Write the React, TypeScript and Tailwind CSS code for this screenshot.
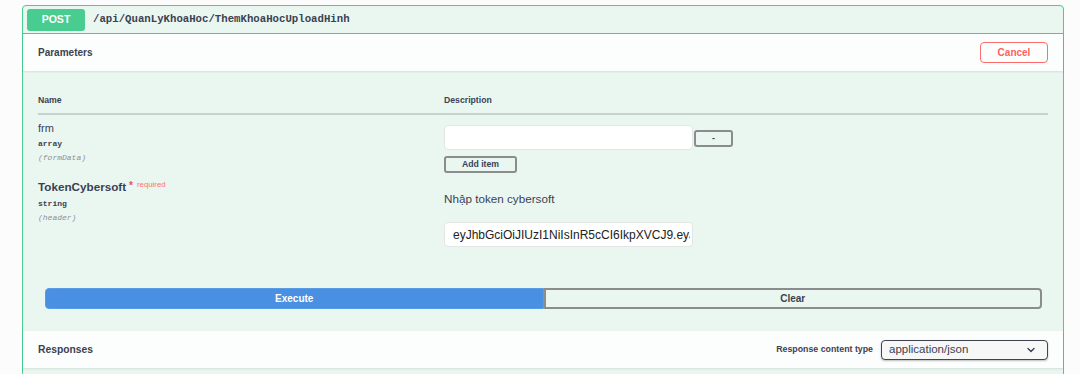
import React from 'react';

const sans = { fontFamily: '"Liberation Sans", Arial, sans-serif' };

const Chevron = () => (
  <svg width="8" height="6" viewBox="0 0 8 6" fill="none">
    <path d="M1 1.5 L4 4.5 L7 1.5" stroke="#3b4151" strokeWidth="1.4" strokeLinecap="round" strokeLinejoin="round" />
  </svg>
);

export default function App() {
  return (
    <div className="w-[1080px] h-[374px] overflow-hidden bg-[#fcfcfc] pt-[5px] pl-[22px]" style={sans}>
      <div className="w-[1042px] h-[400px] rounded-t-[4px] border border-[#49cc90] bg-[#eaf7f1] text-[#3b4151]">
        {/* summary */}
        <div className="h-[28px] flex items-center pl-[4px] border-b border-[#49cc90]">
          <div className="w-[58px] h-[22px] rounded-[3px] bg-[#49cc90] text-white text-[10.5px] font-bold flex items-center justify-center">
            POST
          </div>
          <span className="ml-[8px] text-[10.7px] font-bold font-['Liberation_Mono',monospace]">
            /api/QuanLyKhoaHoc/ThemKhoaHocUploadHinh
          </span>
        </div>

        {/* parameters header */}
        <div className="h-[37px] flex items-center justify-between px-[15px] bg-[#fbfefd] shadow-[0_1px_2px_rgba(0,0,0,0.1)]">
          <h4 className="text-[10px] font-bold">Parameters</h4>
          <button className="w-[68px] h-[21px] rounded-[4px] border border-[#ff6a6a] text-[#ff6060] text-[10px] font-bold">
            Cancel
          </button>
        </div>

        {/* parameters body */}
        <div className="h-[260px]">
          <div className="px-[15px]">
            <div className="grid grid-cols-[406px_1fr] pt-[23px] pb-[7px] border-b-2 border-[rgba(59,65,81,0.2)] text-[8.7px] font-bold leading-[12px]">
              <div>Name</div>
              <div>Description</div>
            </div>

            {/* frm */}
            <div className="grid grid-cols-[406px_1fr] h-[60px]">
              <div className="pt-[6px]">
                <div className="text-[11px] leading-[14px]">frm</div>
                <div className="mt-[4px] text-[8px] leading-[10px] font-bold font-['Liberation_Mono',monospace]">array</div>
                <div className="mt-[4px] text-[8px] leading-[10px] italic text-[#8e9096] font-['Liberation_Mono',monospace]">(formData)</div>
              </div>
              <div className="pt-[10px]">
                <div className="flex items-start">
                  <div className="w-[249px] h-[25px] rounded-[4px] border border-[#e2e6e4] bg-white" />
                  <button className="ml-[1px] mt-[5px] w-[39px] h-[17px] rounded-[3px] border-2 border-[#8a8c8e] text-[9px] font-bold leading-none">
                    -
                  </button>
                </div>
                <button className="mt-[5px] w-[73px] h-[17px] rounded-[3px] border-2 border-[#8a8c8e] text-[8.7px] font-bold leading-none">
                  Add item
                </button>
              </div>
            </div>

            {/* TokenCybersoft */}
            <div className="grid grid-cols-[406px_1fr] h-[72px]">
              <div className="pt-[5px]">
                <div className="flex items-start leading-[14px]">
                  <span className="text-[11.7px] font-bold">TokenCybersoft</span>
                  <span className="ml-[3px] text-[10px] font-bold text-[#ea5050] leading-[12px]">*</span>
                  <span className="ml-[4px] text-[7.8px] text-[#ff7070] leading-[10px]">required</span>
                </div>
                <div className="mt-[5px] text-[8px] leading-[10px] font-bold font-['Liberation_Mono',monospace]">string</div>
                <div className="mt-[4px] text-[8px] leading-[10px] italic text-[#8e9096] font-['Liberation_Mono',monospace]">(header)</div>
              </div>
              <div className="pt-[17px]">
                <p className="text-[11.7px] leading-[14px]">Nhập token cybersoft</p>
                <input
                  readOnly
                  value="eyJhbGciOiJIUzI1NiIsInR5cCI6IkpXVCJ9.eyJTb1RlbiI6IkJvb3RjYW1w"
                  className="block mt-[16px] w-[249px] h-[25px] rounded-[4px] border border-[#e2e6e4] bg-white pl-[8px] pr-[2px] text-[12px] text-[#222] outline-none"
                />
              </div>
            </div>
          </div>

          {/* execute */}
          <div className="mt-[41px] pl-[22px] pr-[21px] grid grid-cols-2">
            <button className="h-[21px] rounded-l-[4px] bg-[#4990e2] border border-[#5a9be6] text-white text-[10px] font-bold">
              Execute
            </button>
            <button className="h-[21px] rounded-r-[4px] border-2 border-[#8a8c8e] text-[10px] font-bold">
              Clear
            </button>
          </div>
        </div>

        {/* responses header */}
        <div className="h-[37px] flex items-center justify-between px-[15px] bg-[#fbfefd] shadow-[0_1px_2px_rgba(0,0,0,0.1)]">
          <h4 className="text-[10.3px] font-bold">Responses</h4>
          <div className="flex items-center">
            <span className="text-[8.8px] font-bold">Response content type</span>
            <div className="ml-[8px] w-[167px] h-[20px] rounded-[4px] border-[1.5px] border-[#41444e] bg-[#f7f7f7] shadow-[0_1px_2px_rgba(0,0,0,0.25)] flex items-center justify-between pl-[7px] pr-[12px]">
              <span className="text-[11.5px]">application/json</span>
              <Chevron />
            </div>
          </div>
        </div>
      </div>
    </div>
  );
}
